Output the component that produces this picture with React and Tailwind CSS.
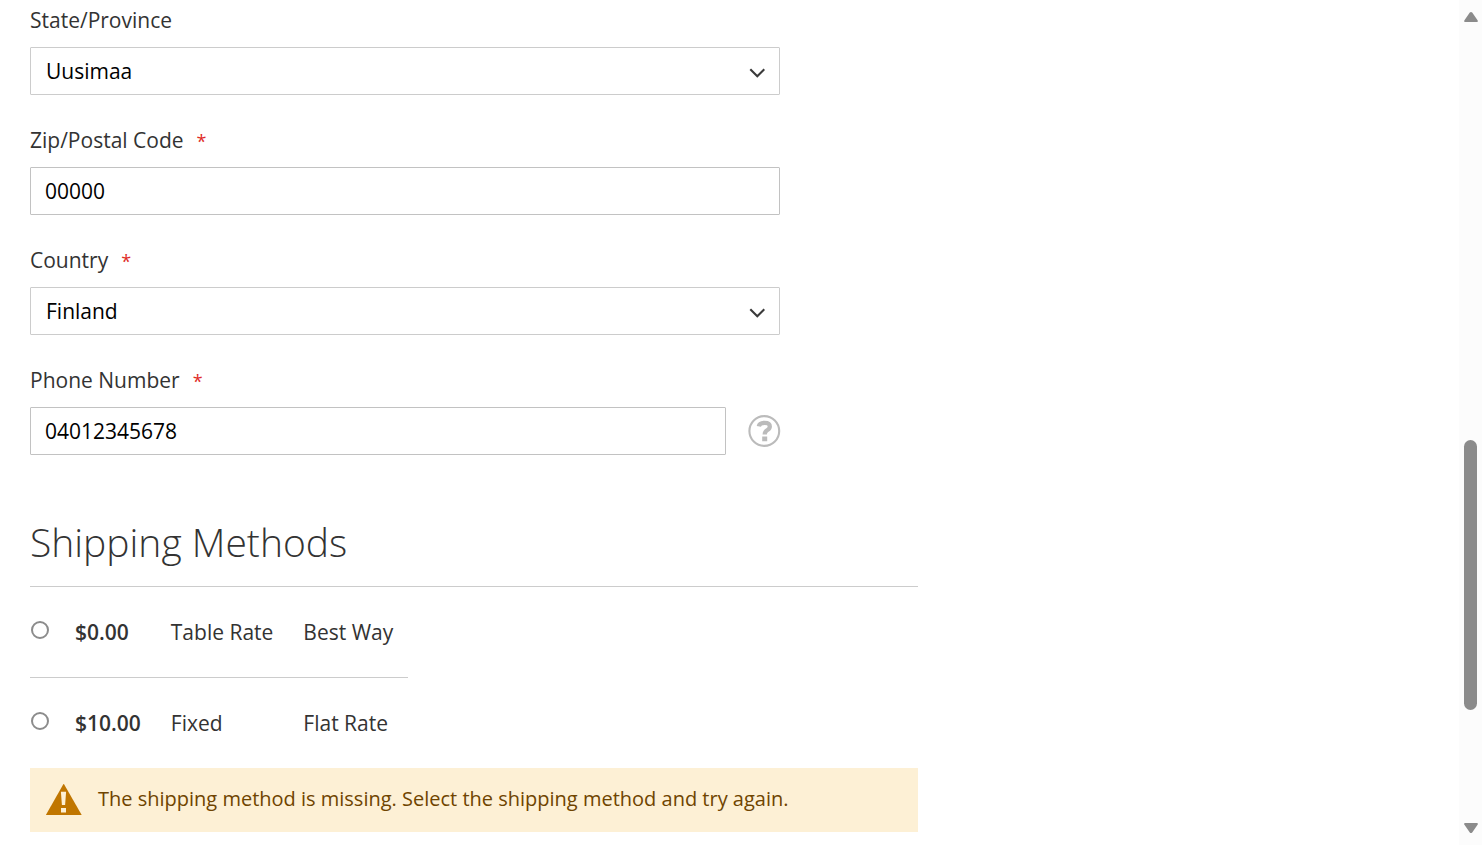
import React from "react";

const regions = ["Uusimaa", "Lappi", "Pirkanmaa", "Satakunta"];
const countries = ["Finland", "Sweden", "Norway", "Denmark"];

const methods = [
  { id: "tablerate", price: "$0.00", method: "Table Rate", carrier: "Best Way" },
  { id: "flatrate", price: "$10.00", method: "Fixed", carrier: "Flat Rate" },
];

const control =
  "block h-12 w-full rounded-[1px] border border-[#c2c2c2] bg-white px-[14px] text-black outline-none";

const cell = "border-[#cccccc] px-[15px] group-first:border-b";

function Field({ id, label, required, children }) {
  return (
    <div>
      <label htmlFor={id} className="mb-3 flex h-[30px] items-center">
        {label}
        {required && <span className="ml-[13px] pt-0.5 text-lg text-[#e02b27]">*</span>}
      </label>
      {children}
    </div>
  );
}

function Select({ id, options }) {
  return (
    <div className="relative">
      <select
        id={id}
        defaultValue={options[0]}
        className="block h-12 w-full appearance-none rounded-[1px] border border-[#cccccc] bg-white pr-10 pl-[15px] text-black outline-none"
      >
        {options.map((option) => (
          <option key={option}>{option}</option>
        ))}
      </select>
      <svg
        viewBox="0 0 16 10"
        className="pointer-events-none absolute top-[21px] right-[15px] h-[10px] w-4"
        fill="none"
        stroke="#3a3a3a"
        strokeWidth="2.1"
        aria-hidden="true"
      >
        <path d="M1.3 1.2 8.3 8.2 15.3 1.2" />
      </svg>
    </div>
  );
}

function ShippingMethods() {
  return (
    <section className="mt-[60px]">
      <h2 className="border-b border-[#cccccc] pt-0.5 pb-5 text-[39px] leading-[49px] font-light">
        Shipping Methods
      </h2>
      <table className="border-separate border-spacing-0">
        <tbody>
          {methods.map((item) => (
            <tr key={item.id} className="group h-[90px] first:h-[91px]">
              <td className="w-[30px] border-[#cccccc] p-0 pb-1 group-first:border-b">
                <input
                  type="radio"
                  id={item.id}
                  name="shipping-method"
                  aria-label={item.carrier}
                  className="ml-px block size-[18px] appearance-none rounded-full border-2 border-[#8c8c8c] bg-white checked:border-[5px]"
                />
              </td>
              <td className={cell + " font-semibold"}>
                <label htmlFor={item.id}>{item.price}</label>
              </td>
              <td className={cell}>{item.method}</td>
              <td className={cell}>{item.carrier}</td>
            </tr>
          ))}
        </tbody>
      </table>
      <div
        role="alert"
        className="flex h-16 items-center gap-4 bg-[#fdf0d5] px-4 text-[20px] text-[#6f4400]"
      >
        <svg viewBox="0 0 36 32" className="h-8 w-9 shrink-0" aria-hidden="true">
          <path fill="#c07600" d="M17.7-.4 35.7 31H-.1Z" />
          <path fill="#fdf0d5" d="M14.9 7.7h5.2l-1 13.3h-3.2ZM15 24h5v4.6h-5Z" />
        </svg>
        <span className="pb-0.5">
          The shipping method is missing. Select the shipping method and try again.
        </span>
      </div>
    </section>
  );
}

function ScrollTrack() {
  return (
    <div
      className="flex w-[23px] shrink-0 flex-col items-center bg-[#fcfcfc] py-3"
      aria-hidden="true"
    >
      <svg viewBox="0 0 14 10" className="h-[10px] w-[14px]" fill="#8b8b8b">
        <path d="M5.8.6Q7-.6 8.2.6L13.7 8.5Q14.2 10 13 10H1Q-.2 10 .3 8.5Z" />
      </svg>
      <div className="grow-[418]" />
      <div className="w-[13px] grow-[270] rounded-full bg-[#8b8b8b]" />
      <div className="grow-[113]" />
      <svg viewBox="0 0 14 10" className="h-[10px] w-[14px]" fill="#8b8b8b">
        <path d="M5.8 9.4Q7 10.6 8.2 9.4L13.7 1.5Q14.2 0 13 0H1Q-.2 0 .3 1.5Z" />
      </svg>
    </div>
  );
}

export default function App() {
  return (
    <div className="flex min-h-screen bg-white font-['Open_Sans',sans-serif] text-[21px] leading-[30px] text-[#333333]">
      <main className="min-w-0 grow px-[30px] pt-[5px]">
        <div className="max-w-[888px]">
          <form className="flex max-w-[750px] flex-col gap-[30px]">
            <Field id="region" label="State/Province">
              <Select id="region" options={regions} />
            </Field>
            <Field id="postcode" label="Zip/Postal Code" required>
              <input id="postcode" defaultValue="00000" className={control} />
            </Field>
            <Field id="country" label="Country" required>
              <Select id="country" options={countries} />
            </Field>
            <Field id="phone" label="Phone Number" required>
              <div className="flex items-center gap-[22px]">
                <input
                  id="phone"
                  type="tel"
                  defaultValue="04012345678"
                  className={control}
                />
                <button type="button" aria-label="Help" className="size-8 shrink-0">
                  <svg viewBox="0 0 32 32" className="size-8 overflow-visible" fill="none">
                    <circle cx="16.3" cy="16" r="14.9" stroke="#bbbbbb" strokeWidth="2.1" />
                    <path
                      d="M10.8 11.4Q11.4 7.8 16.6 7.8 21.8 7.8 21.8 11.4 21.8 13.4 19.4 15 16.7 16.6 16.7 19.6"
                      stroke="#bbbbbb"
                      strokeWidth="4.3"
                    />
                    <path fill="#bbbbbb" d="M14.2 21.6h5v4.6h-5Z" />
                  </svg>
                </button>
              </div>
            </Field>
          </form>
          <ShippingMethods />
        </div>
      </main>
      <ScrollTrack />
    </div>
  );
}
